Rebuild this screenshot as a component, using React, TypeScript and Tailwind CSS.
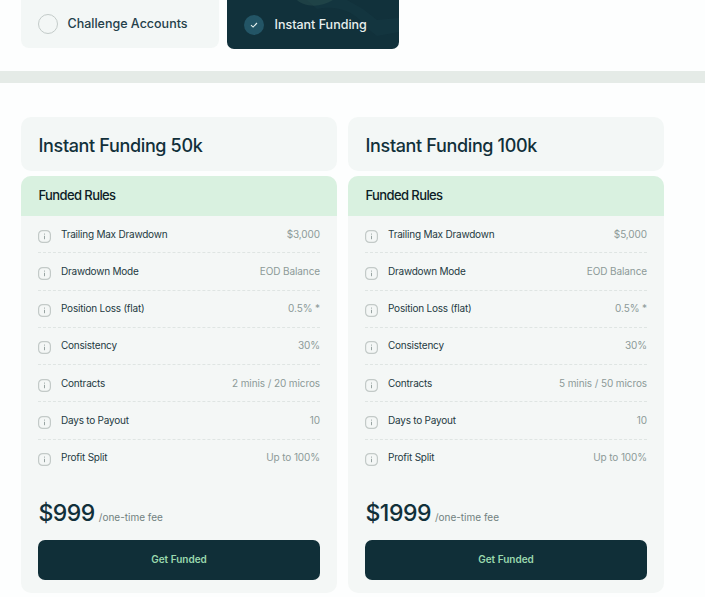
const rows = (a: string, b: string) => [
  ["Trailing Max Drawdown", a],
  ["Drawdown Mode", "EOD Balance"],
  ["Position Loss (flat)", "0.5% *"],
  ["Consistency", "30%"],
  ["Contracts", b],
  ["Days to Payout", "10"],
  ["Profit Split", "Up to 100%"],
];

function Info() {
  return (
    <svg width="13" height="13" viewBox="0 0 13 13" fill="none" className="mt-[3px] shrink-0">
      <rect x="0.6" y="0.6" width="11.8" height="11.8" rx="4" stroke="#c3cac8" strokeWidth="1.2" />
      <rect x="6" y="3.6" width="1" height="1" fill="#98a4a2" />
      <rect x="6" y="5.8" width="1" height="3.4" fill="#98a4a2" />
    </svg>
  );
}

function Card({ title, price, a, b }: { title: string; price: string; a: string; b: string }) {
  return (
    <div className="w-[316px] flex flex-col gap-[5px]">
      <div className="h-[54px] bg-[#f3f7f6] rounded-[10px] pl-[17.5px] pt-[2px] flex items-center text-[18px] font-medium text-[#11303a] tracking-[-0.35px]">
        {title}
      </div>
      <div className="h-[417px] bg-[#f4f7f6] rounded-[10px] flex flex-col overflow-hidden">
        <div className="h-[40px] shrink-0 bg-[#d9f1e0] pl-[17.5px] flex items-center text-[13px] font-medium text-[#0d2026] tracking-[-0.6px]">
          Funded Rules
        </div>
        <div className="px-[17px] flex flex-col">
          {rows(a, b).map(([k, v], i) => (
            <div
              key={k}
              className={"h-[37.3px] shrink-0 flex items-start gap-[10px] pt-[10.6px] " + (i < 6 ? "border-b border-dashed border-[#dfe5e3]" : "")}
            >
              <Info />
              <span className="text-[10px] leading-[14px] tracking-[-0.22px] text-[#1e3a42]">{k}</span>
              <span className="ml-auto text-[10px] leading-[14px] tracking-[-0.1px] text-[#8c9a98]">{v}</span>
            </div>
          ))}
        </div>
        <div className="px-[17.5px] mt-[19.5px] flex items-baseline gap-[4px] h-[33px]">
          <span className="text-[23px] leading-[33px] font-medium tracking-[-0.5px] text-[#11303a]">{price}</span>
          <span className="text-[10px] text-[#71817f]">/one-time fee</span>
        </div>
        <div className="mx-[17px] mt-[10.4px] h-[40px] shrink-0 rounded-[7px] bg-[#102f38] flex items-center justify-center text-[10px] leading-[12px] pb-[1px] font-semibold text-[#9ad9ae]">
          Get Funded
        </div>
      </div>
    </div>
  );
}

export default function App() {
  return (
    <div className="w-[705px] h-[597px] overflow-hidden bg-[#fdfefe] font-['Inter',sans-serif]">
      <div className="pl-[21px] flex gap-[8px] items-start h-[71px]">
        <div className="w-[198px] h-[48px] bg-[#f3f7f6] rounded-b-[8px] pl-[17px] flex items-center gap-[9.5px]">
          <span className="w-[20px] h-[20px] rounded-full border border-[#c3cbc9]" />
          <span className="text-[12.5px] font-medium text-[#24404a] -translate-y-[0.5px]">Challenge Accounts</span>
        </div>
        <div className="relative overflow-hidden w-[172px] h-[49px] bg-[#11313b] rounded-b-[7px] pl-[17px] flex items-center gap-[10.5px]">
          <svg className="absolute inset-0" width="172" height="49" viewBox="0 0 172 49" fill="none">
            <path d="M90 9C108 5 128 10 140 28L150 36L172 32V18L150 20L136 9L120 0H80Z" fill="#1b3f48" opacity="0.3" />
            <path d="M70 0C76 6 92 9 106 0Z" fill="#2f5553" opacity="0.45" />
          </svg>
          <span className="relative w-[20px] h-[20px] rounded-full bg-[#235566] flex items-center justify-center">
            <svg width="10" height="10" viewBox="0 0 10 10" fill="none">
              <path d="M2 5.2 4.1 7.1 8 3" stroke="#e6f1ef" strokeWidth="1.1" />
            </svg>
          </span>
          <span className="relative text-[12.5px] font-medium text-[#e8efee] translate-y-[0.5px]">Instant Funding</span>
        </div>
      </div>
      <div className="h-[12px] bg-[#e5ebe7]" />
      <div className="pl-[21px] pt-[34px] flex gap-[11px]">
        <Card title="Instant Funding 50k" price="$999" a="$3,000" b="2 minis / 20 micros" />
        <Card title="Instant Funding 100k" price="$1999" a="$5,000" b="5 minis / 50 micros" />
      </div>
    </div>
  );
}
